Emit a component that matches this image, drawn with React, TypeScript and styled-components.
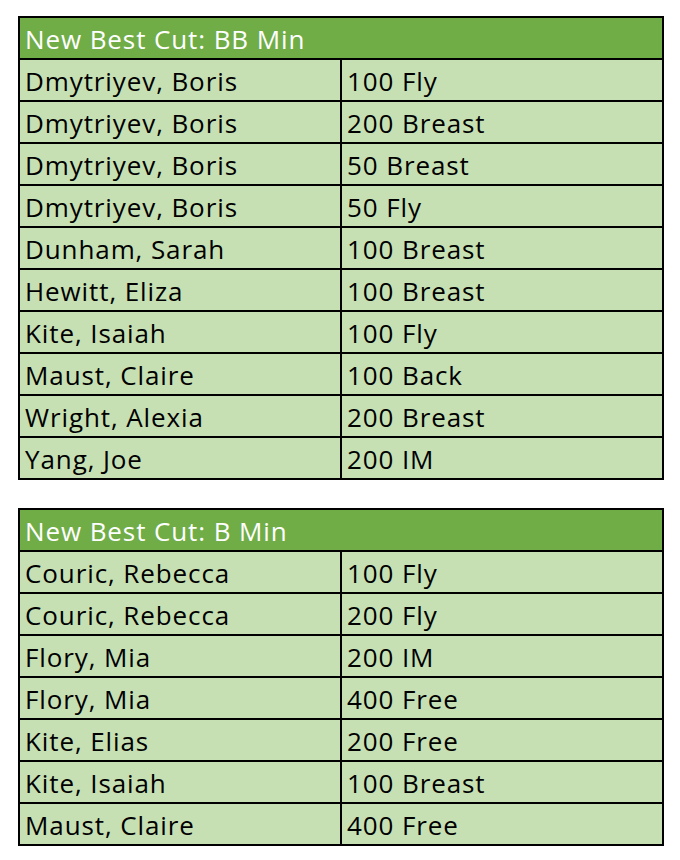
import React from "react";
import styled, { createGlobalStyle } from "styled-components";

const Global = createGlobalStyle`
  html, body { margin: 0; padding: 0; background: #ffffff; }
  body { font-family: "Open Sans", Lato, "Liberation Sans", sans-serif; }
`;

const Page = styled.div`
  display: flex;
  flex-direction: column;
  gap: 28px;
  padding: 16px 0 0 18px;
`;

const Table = styled.div`
  display: grid;
  grid-template-columns: 320px 320px;
  grid-auto-rows: 40px;
  gap: 2px;
  width: 642px;
  padding: 2px;
  background: #000000;
`;

const Header = styled.div`
  grid-column: 1 / span 2;
  background: #70ad47;
  color: #ffffff;
  font-size: 26px;
  font-weight: 500;
  letter-spacing: 0.9px;
  line-height: 40px;
  padding: 1px 0 0 5px;
  box-sizing: border-box;
  white-space: nowrap;
`;

const Cell = styled.div`
  background: #c6e0b4;
  color: #000000;
  font-size: 26px;
  font-weight: 500;
  letter-spacing: 0.9px;
  line-height: 40px;
  padding: 1px 0 0 5px;
  box-sizing: border-box;
  white-space: nowrap;
`;

type Row = [string, string];

const bb: Row[] = [
  ["Dmytriyev, Boris", "100 Fly"],
  ["Dmytriyev, Boris", "200 Breast"],
  ["Dmytriyev, Boris", "50 Breast"],
  ["Dmytriyev, Boris", "50 Fly"],
  ["Dunham, Sarah", "100 Breast"],
  ["Hewitt, Eliza", "100 Breast"],
  ["Kite, Isaiah", "100 Fly"],
  ["Maust, Claire", "100 Back"],
  ["Wright, Alexia", "200 Breast"],
  ["Yang, Joe", "200 IM"],
];

const b: Row[] = [
  ["Couric, Rebecca", "100 Fly"],
  ["Couric, Rebecca", "200 Fly"],
  ["Flory, Mia", "200 IM"],
  ["Flory, Mia", "400 Free"],
  ["Kite, Elias", "200 Free"],
  ["Kite, Isaiah", "100 Breast"],
  ["Maust, Claire", "400 Free"],
];

function CutTable({ title, rows }: { title: string; rows: Row[] }) {
  return (
    <Table>
      <Header>{title}</Header>
      {rows.map(([name, ev], i) => (
        <React.Fragment key={i}>
          <Cell>{name}</Cell>
          <Cell>{ev}</Cell>
        </React.Fragment>
      ))}
    </Table>
  );
}

export default function App() {
  return (
    <>
      <Global />
      <Page>
        <CutTable title="New Best Cut: BB Min" rows={bb} />
        <CutTable title="New Best Cut: B Min" rows={b} />
      </Page>
    </>
  );
}
